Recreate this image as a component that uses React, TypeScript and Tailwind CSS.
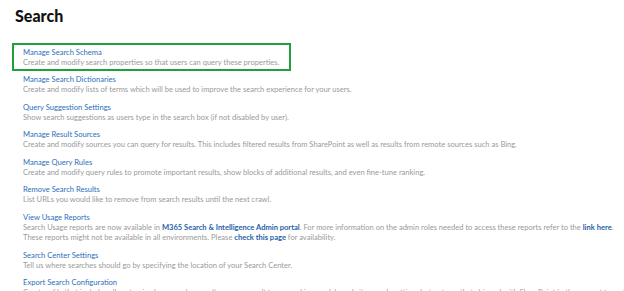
import React from 'react'

type Item = {
  title: string
  desc: React.ReactNode
}

const A = ({ children }: { children: React.ReactNode }) => (
  <span className="font-bold text-[#1f5fa8]">{children}</span>
)

const items: Item[] = [
  {
    title: 'Manage Search Schema',
    desc: 'Create and modify search properties so that users can query these properties.',
  },
  {
    title: 'Manage Search Dictionaries',
    desc: 'Create and modify lists of terms which will be used to improve the search experience for your users.',
  },
  {
    title: 'Query Suggestion Settings',
    desc: 'Show search suggestions as users type in the search box (if not disabled by user).',
  },
  {
    title: 'Manage Result Sources',
    desc: 'Create and modify sources you can query for results. This includes filtered results from SharePoint as well as results from remote sources such as Bing.',
  },
  {
    title: 'Manage Query Rules',
    desc: 'Create and modify query rules to promote important results, show blocks of additional results, and even fine-tune ranking.',
  },
  {
    title: 'Remove Search Results',
    desc: 'List URLs you would like to remove from search results until the next crawl.',
  },
  {
    title: 'View Usage Reports',
    desc: (
      <>
        Search Usage reports are now available in <A>M365 Search &amp; Intelligence Admin portal</A>. For more
        information on the admin roles needed to access these reports refer to the <A>link here</A>.
        <br />
        These reports might not be available in all environments. Please <A>check this page</A> for availability.
      </>
    ),
  },
  {
    title: 'Search Center Settings',
    desc: 'Tell us where searches should go by specifying the location of your Search Center.',
  },
  {
    title: 'Export Search Configuration',
    desc: 'Create a file that includes all customized query rules, result sources, result types, ranking models and site search settings but not any that shipped with SharePoint in the current tenant.',
  },
]

export default function App() {
  return (
    <div className="h-[291px] w-[624px] overflow-hidden bg-white font-['Lato',sans-serif]">
      <h1 className="pl-[15px] pt-[5px] text-[16px] font-black leading-[22px] text-[#111]">Search</h1>
      <div className="mt-[16px] flex flex-col items-start pl-[12px]">
        {items.map((item, i) => (
          <div
            key={item.title}
            className={
              i === 0
                ? 'border-2 border-[#1fa03c] pt-[1.5px] pb-[0.5px] pl-[9px] pr-[10px]'
                : 'border-2 border-transparent pt-[1.5px] pb-[0.5px] pl-[9px] pr-[10px]'
            }
          >
            <div className="whitespace-nowrap text-[7.6px] leading-[11px] text-[#2b6fbb]">{item.title}</div>
            <div className="whitespace-nowrap text-[7.55px] leading-[10.5px] text-[#9a9a9a]">{item.desc}</div>
          </div>
        ))}
      </div>
    </div>
  )
}
